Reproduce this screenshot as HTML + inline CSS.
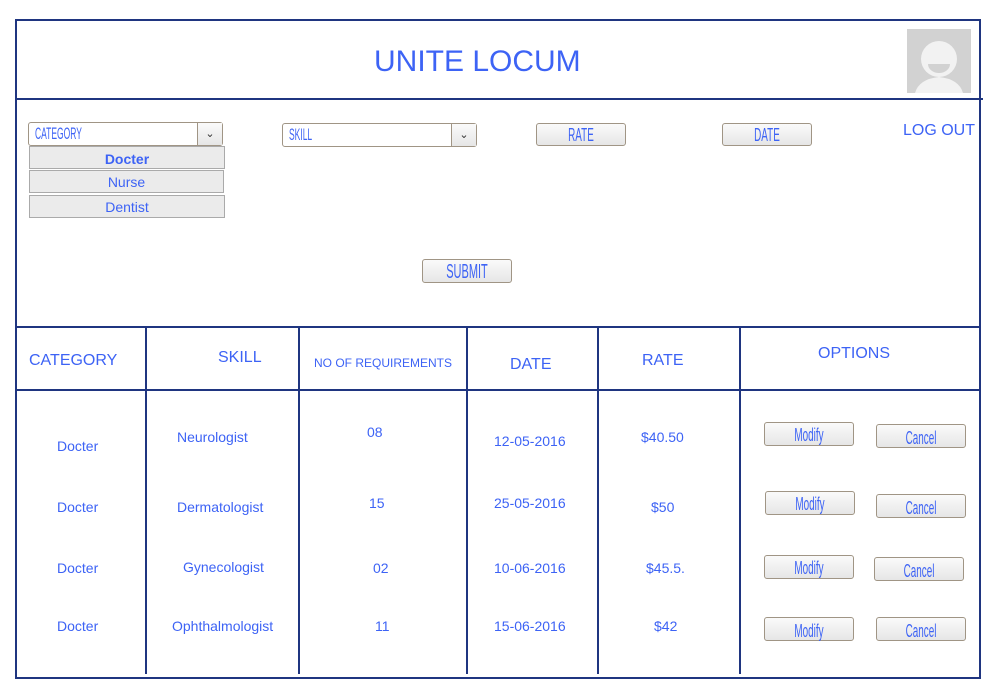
<!DOCTYPE html><html><head><style>
body{margin:0;width:985px;height:684px;background:#fff;position:relative;overflow:hidden;font-family:"Liberation Sans",sans-serif;color:#3d63f5}
.l{position:absolute;background:#1f3580}
.t{position:absolute;white-space:nowrap}
.btn{position:absolute;border:1px solid #a09585;border-radius:3px;background:linear-gradient(#fafafa,#e6e6e6);box-sizing:border-box}
.c{position:absolute;left:0;right:0;text-align:center;font-size:18px;transform:scaleX(.55);line-height:22px;top:0}
.opt{position:absolute;border:1px solid #aaa;background:#ebebeb;box-sizing:border-box;text-align:center;font-size:14px;line-height:22px}
.sel{position:absolute;border:1px solid #a09585;border-radius:3px;background:#fff;box-sizing:border-box}
.sel .ar{position:absolute;right:0;top:0;bottom:0;width:24px;border-left:1px solid #a09585;background:linear-gradient(#fafafa,#e6e6e6);text-align:center;color:#333;font-size:11px;line-height:22px}
.sel .tx{position:absolute;left:6px;top:1px;font-size:17px;transform:scaleX(.5);transform-origin:left;line-height:20px}
</style></head><body>
<div class="l" style="left:15px;top:19px;width:966px;height:2px"></div>
<div class="l" style="left:15px;top:19px;width:2px;height:660px"></div>
<div class="l" style="left:979px;top:19px;width:2px;height:660px"></div>
<div class="l" style="left:15px;top:677px;width:966px;height:2px"></div>
<div class="l" style="left:15px;top:98px;width:968px;height:2px"></div>
<div class="l" style="left:15px;top:326px;width:966px;height:2px"></div>
<div class="l" style="left:15px;top:389px;width:966px;height:2px"></div>
<div class="l" style="left:145px;top:327px;width:2px;height:347px"></div>
<div class="l" style="left:298px;top:327px;width:2px;height:347px"></div>
<div class="l" style="left:466px;top:327px;width:2px;height:347px"></div>
<div class="l" style="left:597px;top:327px;width:2px;height:347px"></div>
<div class="l" style="left:739px;top:327px;width:2px;height:347px"></div>

<div class="t" style="left:374px;top:45px;font-size:30px">UNITE LOCUM</div>
<svg style="position:absolute;left:907px;top:29px" width="64" height="64"><rect width="64" height="64" fill="#d2d2d2"/><circle cx="32" cy="30" r="18" fill="#f2f2f2"/><path d="M21 35 A11 9 0 0 0 43 35 Z" fill="#d2d2d2"/><path d="M8 64 Q12 50 32 48 Q52 50 56 64Z" fill="#f2f2f2"/></svg>

<div class="sel" style="left:28px;top:122px;width:195px;height:24px"><div class="tx">CATEGORY</div><div class="ar">&#8964;</div></div>
<div class="sel" style="left:282px;top:123px;width:195px;height:24px"><div class="tx">SKILL</div><div class="ar">&#8964;</div></div>
<div class="opt" style="left:29px;top:146px;width:196px;height:23px;font-weight:bold;line-height:24px">Docter</div>
<div class="opt" style="left:29px;top:170px;width:195px;height:23px">Nurse</div>
<div class="opt" style="left:29px;top:195px;width:196px;height:23px">Dentist</div>

<div class="btn" style="left:536px;top:123px;width:90px;height:23px"><div class="c">RATE</div></div>
<div class="btn" style="left:722px;top:123px;width:90px;height:23px"><div class="c">DATE</div></div>
<div class="t" style="left:903px;top:122px;font-size:16px">LOG OUT</div>
<div class="btn" style="left:422px;top:259px;width:90px;height:24px"><div class="c" style="font-size:20px;line-height:24px">SUBMIT</div></div>

<div class="t" style="left:29px;top:352px;font-size:16px">CATEGORY</div>
<div class="t" style="left:218px;top:349px;font-size:16px">SKILL</div>
<div class="t" style="left:314px;top:356px;font-size:12px">NO OF REQUIREMENTS</div>
<div class="t" style="left:510px;top:356px;font-size:16px">DATE</div>
<div class="t" style="left:642px;top:352px;font-size:16px">RATE</div>
<div class="t" style="left:818px;top:345px;font-size:16px">OPTIONS</div>

<div style="font-size:14px">
<div class="t" style="left:57px;top:438px">Docter</div>
<div class="t" style="left:177px;top:429px">Neurologist</div>
<div class="t" style="left:367px;top:424px">08</div>
<div class="t" style="left:494px;top:433px">12-05-2016</div>
<div class="t" style="left:641px;top:429px">$40.50</div>
<div class="t" style="left:57px;top:499px">Docter</div>
<div class="t" style="left:177px;top:499px">Dermatologist</div>
<div class="t" style="left:369px;top:495px">15</div>
<div class="t" style="left:494px;top:495px">25-05-2016</div>
<div class="t" style="left:651px;top:499px">$50</div>
<div class="t" style="left:57px;top:560px">Docter</div>
<div class="t" style="left:183px;top:559px">Gynecologist</div>
<div class="t" style="left:373px;top:560px">02</div>
<div class="t" style="left:494px;top:560px">10-06-2016</div>
<div class="t" style="left:646px;top:560px">$45.5.</div>
<div class="t" style="left:57px;top:618px">Docter</div>
<div class="t" style="left:172px;top:618px">Ophthalmologist</div>
<div class="t" style="left:375px;top:618px">11</div>
<div class="t" style="left:494px;top:618px">15-06-2016</div>
<div class="t" style="left:654px;top:618px">$42</div>
</div>

<div class="btn" style="left:764px;top:422px;width:90px;height:24px"><div class="c" style="line-height:24px">Modify</div></div>
<div class="btn" style="left:876px;top:424px;width:90px;height:24px"><div class="c" style="line-height:26px">Cancel</div></div>
<div class="btn" style="left:765px;top:491px;width:90px;height:24px"><div class="c" style="line-height:24px">Modify</div></div>
<div class="btn" style="left:876px;top:494px;width:90px;height:24px"><div class="c" style="line-height:26px">Cancel</div></div>
<div class="btn" style="left:764px;top:555px;width:90px;height:24px"><div class="c" style="line-height:24px">Modify</div></div>
<div class="btn" style="left:874px;top:557px;width:90px;height:24px"><div class="c" style="line-height:26px">Cancel</div></div>
<div class="btn" style="left:764px;top:617px;width:90px;height:24px"><div class="c" style="line-height:26px">Modify</div></div>
<div class="btn" style="left:876px;top:617px;width:90px;height:24px"><div class="c" style="line-height:26px">Cancel</div></div>
</body></html>
